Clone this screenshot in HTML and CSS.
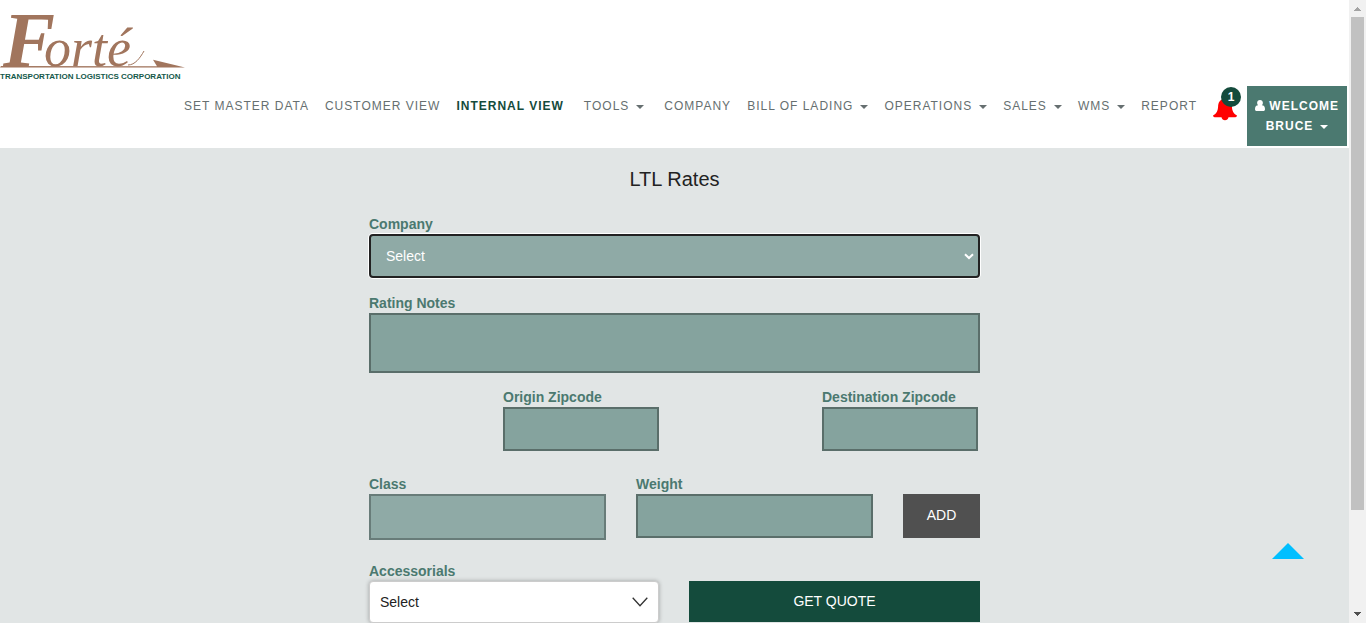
FILE: index.html
```html
<!DOCTYPE html>
<html lang="en">
<head>
<meta charset="utf-8">
<title>LTL Rates</title>
<link rel="stylesheet" href="styles.css">
</head>
<body>
<div class="page">
  <header class="header" id="top">
    <a class="logo" href="#top" aria-label="Forté Transportation Logistics Corporation">
      <svg width="186" height="86" viewBox="0 0 186 86">
        <text class="logo-name" x="3" y="66"><tspan class="logo-initial">F</tspan><tspan class="logo-rest" dx="-11">orté</tspan></text>
        <path class="logo-swoosh" d="M0 67.500 L1 66 L157 66.200 L153 59.700 L185 67.500 Z"/>
        <path class="logo-tail" d="M128 65 C135 65 140 58 144 51"/>
        <text class="logo-sub" x="0" y="79">TRANSPORTATION LOGISTICS CORPORATION</text>
      </svg>
    </a>
    <nav class="nav">
      <a class="nav-link" href="#">SET MASTER DATA</a>
      <a class="nav-link" href="#">CUSTOMER VIEW</a>
      <a class="nav-link active" href="#">INTERNAL VIEW</a>
      <a class="nav-link caret spaced" href="#">TOOLS</a>
      <a class="nav-link" href="#">COMPANY</a>
      <a class="nav-link caret" href="#">BILL OF LADING</a>
      <a class="nav-link caret" href="#">OPERATIONS</a>
      <a class="nav-link caret" href="#">SALES</a>
      <a class="nav-link caret" href="#">WMS</a>
      <a class="nav-link" href="#">REPORT</a>
      <a class="alerts" href="#" aria-label="Notifications">
        <svg width="24" height="24" viewBox="0 0 24 24"><path fill="#f00" d="M12 0 C13 0 13.700 .8 13.700 2 C17.500 3 18.700 6 18.900 9.500 C19.100 14 20.500 16.500 24 18.500 C23.800 20.200 22.500 20.200 21.500 20.200 H15.500 C15 24.200 9 24.200 8.500 20.200 H2.500 C1.500 20.200 .2 20.200 0 18.500 C3.500 16.500 4.900 14 5.100 9.500 C5.300 6 6.500 3 10.300 2 C10.300 .8 11 0 12 0 Z"/></svg>
        <span class="badge">1</span>
      </a>
      <button class="user" type="button">
        <svg width="10" height="11" viewBox="0 0 10 11"><path fill="#fff" d="M5 0 C6.700 0 7.900 1.200 7.900 2.900 C7.900 3.900 7.500 4.700 6.900 5.200 C9 5.200 10 6.700 10 9 C10 10.400 9.300 11 8.300 11 H1.700 C.7 11 0 10.400 0 9 C0 6.700 1 5.200 3.100 5.200 C2.500 4.700 2.100 3.900 2.100 2.900 C2.100 1.200 3.300 0 5 0 Z"/></svg>
        WELCOME <span class="caret">BRUCE</span>
      </button>
    </nav>
  </header>

  <main class="main">
    <h1 class="title">LTL Rates</h1>
    <form class="form">
      <div class="field company">
        <label for="company">Company</label>
        <div class="select-wrap">
          <select id="company" class="control select current"><option>Select</option></select>
          <svg class="chevron" width="10" height="7" viewBox="0 0 10 7"><path d="M1 1.200 L5 5 L9 1.200" fill="none" stroke="#fff" stroke-width="2"/></svg>
        </div>
      </div>
      <div class="field">
        <label for="notes">Rating Notes</label>
        <textarea id="notes" class="control notes"></textarea>
      </div>
      <div class="row zips">
        <div class="field zip">
          <label for="origin">Origin Zipcode</label>
          <input id="origin" class="control" type="text">
        </div>
        <div class="field zip">
          <label for="destination">Destination Zipcode</label>
          <input id="destination" class="control" type="text">
        </div>
      </div>
      <div class="row items">
        <div class="field">
          <label for="class">Class</label>
          <select id="class" class="control select tall"><option></option></select>
        </div>
        <div class="field">
          <label for="weight">Weight</label>
          <input id="weight" class="control" type="text">
        </div>
        <button class="button add" type="button">ADD</button>
      </div>
      <div class="row actions">
        <div class="field">
          <label for="accessorials">Accessorials</label>
          <div class="select-wrap">
            <select id="accessorials" class="picker"><option>Select</option></select>
            <svg class="chevron wide" width="16" height="10" viewBox="0 0 16 10"><path d="M.7 .8 L8 8.700 L15.300 .8" fill="none" stroke="#333" stroke-width="1.300"/></svg>
          </div>
        </div>
        <button class="button quote" type="submit">GET QUOTE</button>
      </div>
    </form>
  </main>
  <a class="to-top" href="#top" aria-label="Back to top"></a>
</div>
<div class="scrollbar" aria-hidden="true">
  <svg width="17" height="17" viewBox="0 0 17 17" shape-rendering="crispEdges"><path fill="#a3a3a3" d="M5 11 L8.500 7 L12 11 Z"/></svg>
  <div class="track"><div class="thumb"></div></div>
  <svg width="17" height="17" viewBox="0 0 17 17" shape-rendering="crispEdges"><path fill="#505050" d="M5 6 L12 6 L8.500 10 Z"/></svg>
</div>
</body>
</html>
```
FILE: styles.css
```css
* { box-sizing: border-box; }

body {
  margin: 0;
  height: 100vh;
  overflow: hidden;
  display: grid;
  grid-template-columns: 1fr 17px;
  font-family: "Liberation Sans", Arial, sans-serif;
  font-size: 14px;
  line-height: 20px;
}

.page {
  display: flex;
  flex-direction: column;
  height: 100vh;
  overflow: hidden;
  background: #e1e5e5;
}

.header {
  flex: none;
  padding: 0 2px 2px 0;
  background: #fff;
}

.logo { display: block; width: 186px; }
.logo svg { display: block; overflow: visible; }
.logo-name {
  font-family: "Liberation Serif", "Times New Roman", serif;
  font-style: italic;
  fill: #a1755d;
}
.logo-initial { font-size: 78px; font-weight: 700; }
.logo-rest { font-size: 54px; }
.logo-swoosh { fill: #a1755d; }
.logo-tail { fill: none; stroke: #a1755d; }
.logo-sub {
  font-family: "Liberation Sans", Arial, sans-serif;
  font-size: 8px;
  font-weight: 700;
  fill: #14594a;
}

.nav {
  display: flex;
  justify-content: flex-end;
  align-items: flex-start;
  font-size: 12px;
  letter-spacing: 1px;
}
.nav-link {
  padding: 10px 8px;
  color: #666f70;
  text-decoration: none;
  white-space: nowrap;
}
.nav-link.active { color: #144b3c; font-weight: 700; }
.nav-link.spaced { margin: 0 4px; }
.caret::after {
  content: "";
  display: inline-block;
  margin-left: 7px;
  vertical-align: 1px;
  border: 4px solid transparent;
  border-top-color: currentColor;
  border-bottom: 0;
}

.alerts {
  position: relative;
  width: 28px;
  margin: 11px 0 0 8px;
}
.alerts svg { display: block; }
.badge {
  position: absolute;
  top: -10px;
  left: 8px;
  width: 20px;
  height: 20px;
  border-radius: 50%;
  background: #144b3c;
  color: #fff;
  font-size: 12px;
  font-weight: 700;
  letter-spacing: 0;
  text-align: center;
}

.user {
  width: 100px;
  margin-left: 6px;
  padding: 10px 6px;
  border: 0;
  background: #4b7970;
  color: #fff;
  font: 700 12px/20px "Liberation Sans", Arial, sans-serif;
  letter-spacing: 1px;
}
.user svg { vertical-align: -1px; }

.main { padding: 16px 20px; }
.title {
  margin: 0 0 20px;
  color: #222;
  font-size: 20px;
  font-weight: 400;
  line-height: 30px;
  text-align: center;
}

.form {
  display: flex;
  flex-direction: column;
  gap: 14px;
  max-width: 611px;
  margin: 0 auto;
}
.field { display: flex; flex-direction: column; min-width: 0; }
.field label { color: #4b7970; font-weight: 700; }
.company { margin-bottom: 1px; }

.control {
  width: 100%;
  height: 44px;
  padding: 0 15px;
  border: 2px solid #5a6e6a;
  border-radius: 0;
  background: #85a39e;
  color: #fff;
  font: 14px "Liberation Sans", Arial, sans-serif;
}
.select {
  appearance: none;
  border-color: #687c79;
  background: #8faaa6;
}
.select.current {
  display: block;
  border-color: #222;
  border-radius: 4px;
  box-shadow: 0 0 0 1px #fff;
}
.select.tall { height: 46px; }
.notes { height: 60px; resize: none; }

.select-wrap { position: relative; }
.chevron {
  position: absolute;
  top: 0;
  bottom: 0;
  right: 6px;
  margin: auto 0;
  pointer-events: none;
}
.chevron.wide { right: 11px; }

.row { display: grid; column-gap: 30px; }
.zips {
  grid-template-columns: 156px 156px;
  justify-content: end;
  column-gap: 163px;
  padding-right: 2px;
  margin-bottom: 9px;
}
.items { grid-template-columns: 1fr 1fr 77px; margin-bottom: 7px; }
.actions { grid-template-columns: 290px 1fr; }

.button {
  border: 0;
  padding: 0 12px 2px;
  color: #fff;
  font: 14px "Liberation Sans", Arial, sans-serif;
}
.add { height: 44px; margin-top: 20px; background: #505050; }
.quote { height: 41px; margin-top: 20px; background: #144b3c; }

.picker {
  display: block;
  appearance: none;
  width: 100%;
  height: 42px;
  padding: 0 10px;
  border: 1px solid #ccc;
  border-radius: 4px;
  background: #fff;
  box-shadow: 0 0 4px rgba(0, 0, 0, .3);
  color: #222;
  font: 14px "Liberation Sans", Arial, sans-serif;
}

.to-top {
  position: fixed;
  right: 62px;
  bottom: 64px;
  border: 16px solid transparent;
  border-bottom-color: #00bfff;
  border-top: 0;
}

.scrollbar {
  display: flex;
  flex-direction: column;
  height: 100vh;
  background: #f1f1f1;
}
.scrollbar svg { display: block; flex: none; }
.track { flex: 1; padding: 0 2px; }
.thumb { height: 83.7%; background: #c1c1c1; }
```
